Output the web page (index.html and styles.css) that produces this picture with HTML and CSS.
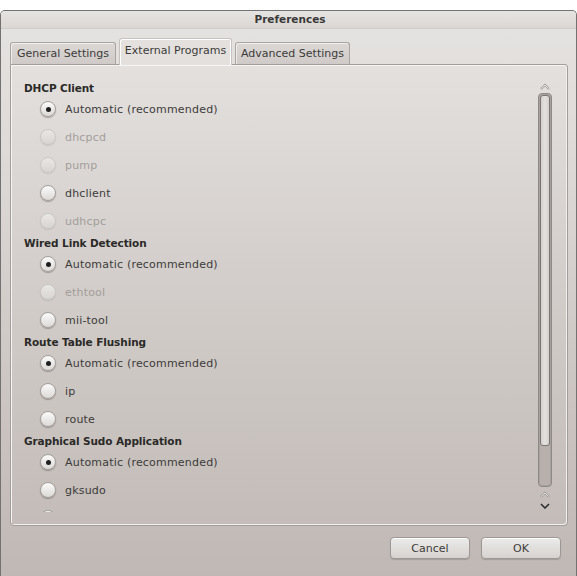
FILE: index.html
```html
<!DOCTYPE html>
<html>
<head>
<meta charset="utf-8">
<link rel="stylesheet" href="styles.css">
</head>
<body>
<div class="window">
  <div class="titlebar">Preferences</div>
  <div class="tabs">
    <div class="tab tab-general">General Settings</div>
    <div class="tab tab-active tab-external">External Programs</div>
    <div class="tab tab-advanced">Advanced Settings</div>
  </div>
  <div class="panel">
    <div class="viewport">
      <div class="content">
        <div class="group-title">DHCP Client</div>
        <div class="row"><span class="radio checked"></span><span class="label">Automatic (recommended)</span></div>
        <div class="row disabled"><span class="radio"></span><span class="label">dhcpcd</span></div>
        <div class="row disabled"><span class="radio"></span><span class="label">pump</span></div>
        <div class="row"><span class="radio"></span><span class="label">dhclient</span></div>
        <div class="row disabled"><span class="radio"></span><span class="label">udhcpc</span></div>
        <div class="group-title">Wired Link Detection</div>
        <div class="row"><span class="radio checked"></span><span class="label">Automatic (recommended)</span></div>
        <div class="row disabled"><span class="radio"></span><span class="label">ethtool</span></div>
        <div class="row"><span class="radio"></span><span class="label">mii-tool</span></div>
        <div class="group-title">Route Table Flushing</div>
        <div class="row"><span class="radio checked"></span><span class="label">Automatic (recommended)</span></div>
        <div class="row"><span class="radio"></span><span class="label">ip</span></div>
        <div class="row"><span class="radio"></span><span class="label">route</span></div>
        <div class="group-title">Graphical Sudo Application</div>
        <div class="row"><span class="radio checked"></span><span class="label">Automatic (recommended)</span></div>
        <div class="row"><span class="radio"></span><span class="label">gksudo</span></div>
        <div class="row"><span class="radio"></span></div>
      </div>
    </div>
    <div class="scrollbar">
      <div class="stepper">
        <svg width="10" height="7" viewBox="0 0 10 7"><path d="M1 6 L5 2 L9 6" fill="none" stroke="#9d9895" stroke-width="2"/><path d="M1.5 5.6 L5 2.1 L8.5 5.6" fill="none" stroke="#f6f5f4" stroke-width="0.9"/></svg>
      </div>
      <div class="trough"><div class="slider"></div></div>
      <div class="stepper stepper-bottom">
        <svg width="10" height="7" viewBox="0 0 10 7"><path d="M1 6 L5 2 L9 6" fill="none" stroke="#9d9895" stroke-width="2"/><path d="M1.5 5.6 L5 2.1 L8.5 5.6" fill="none" stroke="#f6f5f4" stroke-width="0.9"/></svg>
        <svg width="10" height="6" viewBox="0 0 10 6"><path d="M1 1 L5 5 L9 1" fill="none" stroke="#2a2a2a" stroke-width="1.5"/></svg>
      </div>
    </div>
  </div>
  <div class="footer">
    <button class="btn">Cancel</button>
    <button class="btn">OK</button>
  </div>
</div>
</body>
</html>
```

FILE: styles.css
```css
* { box-sizing: border-box; }
html, body { margin: 0; padding: 0; background: #ffffff; }
body {
  font-family: "DejaVu Sans", "Noto Sans", sans-serif;
  font-size: 11px;
  color: #3c3b39;
}
.window {
  margin-top: 10px;
  width: 577px;
  height: 566px;
  border: 1px solid #747270;
  border-bottom: none;
  border-radius: 5px 5px 0 0;
  background: linear-gradient(#e5e3e1 0%, #dcd8d5 30%, #c9c2bf 75%, #bfb8b4 100%);
  display: flex;
  flex-direction: column;
  overflow: hidden;
}
.titlebar {
  height: 18px;
  line-height: 17px;
  text-align: center;
  font-weight: bold;
  font-size: 10.5px;
  color: #3a3937;
  background: linear-gradient(#e6e4e2, #dad7d4);
  border-bottom: 1px solid #d0ccc9;
  padding-left: 3px;
}
.tabs {
  display: flex;
  align-items: flex-end;
  gap: 3px;
  height: 26px;
  margin-top: 9px;
  padding-left: 9px;
  position: relative;
  z-index: 2;
}
.tab {
  height: 22px;
  line-height: 21px;
  text-align: center;
  border: 1px solid #aaa5a2;
  border-bottom: none;
  border-radius: 3px 3px 0 0;
  background: linear-gradient(#dcd8d5, #cfcac7);
  box-shadow: inset 1px 1px 0 rgba(255,255,255,0.6);
  color: #3c3b39;
  white-space: nowrap;
}
.tab-general { width: 106px; }
.tab-external { width: 113px; }
.tab-advanced { width: 115px; }
.tab-active {
  height: 27px;
  line-height: 24px;
  margin-bottom: -1px;
  background: #e3e0de;
  border-color: #c7c2bf;
  box-shadow: inset 1px 1px 0 #ffffff, inset -1px 0 0 #ffffff;
}
.panel {
  margin-left: 9px;
  width: 558px;
  height: 462px;
  border: 1px solid #a29d9a;
  border-radius: 0 3px 4px 4px;
  box-shadow: inset 1px 1px 0 #f6f5f4, inset -1px -1px 0 #f2f0ef;
  background: linear-gradient(#e3e0de 0%, #d5d0cd 40%, #c3bcb8 100%);
  display: flex;
  padding: 14px 0 13px 13px;
  position: relative;
  z-index: 1;
}
.viewport {
  flex: 1;
  overflow: hidden;
  height: 433px;
}
.content { padding-top: 1px; }
.group-title {
  height: 15px;
  padding-top: 1px;
  line-height: 15px;
  font-weight: bold;
  font-size: 10.5px;
  letter-spacing: -0.1px;
  color: #2b2a28;
}
.row {
  height: 28px;
  display: flex;
  align-items: center;
  padding-left: 16px;
  gap: 9px;
}
.label { letter-spacing: 0.2px; }
.radio {
  width: 16px;
  height: 16px;
  border-radius: 50%;
  border: 1px solid #a39f9c;
  background: linear-gradient(#fbfbfa, #dcd9d6);
  box-shadow: 0 1px 1px rgba(60,50,45,0.35);
  display: flex;
  align-items: center;
  justify-content: center;
  flex: none;
}
.radio.checked::after {
  content: "";
  width: 5px;
  height: 5px;
  border-radius: 50%;
  background: #1f1f1f;
}
.row.disabled .radio {
  border-color: #cbc7c4;
  background: linear-gradient(#e9e7e5, #d8d4d1);
  box-shadow: 0 1px 1px rgba(60,50,45,0.12);
}
.row.disabled .label { color: #a39e9b; }
.scrollbar {
  width: 14px;
  margin-left: 10px;
  margin-right: 15px;
  display: flex;
  flex-direction: column;
}
.stepper {
  height: 14px;
  display: flex;
  align-items: center;
  justify-content: center;
}
.stepper-bottom {
  height: 25px;
  flex-direction: column;
  gap: 5px;
  justify-content: center;
}
.trough {
  flex: 1;
  border: 1px solid #8e8986;
  border-radius: 4px;
  background: #b7b0ad;
  box-shadow: inset 0 0 0 1px rgba(0,0,0,0.08);
  padding: 1px;
}
.slider {
  height: 351px;
  border: 1px solid #7a7573;
  border-radius: 3px;
  background: linear-gradient(90deg, #d4d0cd, #e4e1df 50%, #d4d0cd);
}
.footer {
  display: flex;
  justify-content: flex-end;
  gap: 11px;
  padding-right: 15px;
  margin-top: 11px;
}
.btn {
  width: 80px;
  height: 22px;
  font-family: inherit;
  font-size: 11px;
  color: #3c3b39;
  border: 1px solid #9d9895;
  border-radius: 4px;
  background: linear-gradient(#ecebe9, #d6d2cf);
  box-shadow: inset 0 1px 0 #ffffff, 0 1px 1px rgba(0,0,0,0.15);
  padding: 0;
}
```
